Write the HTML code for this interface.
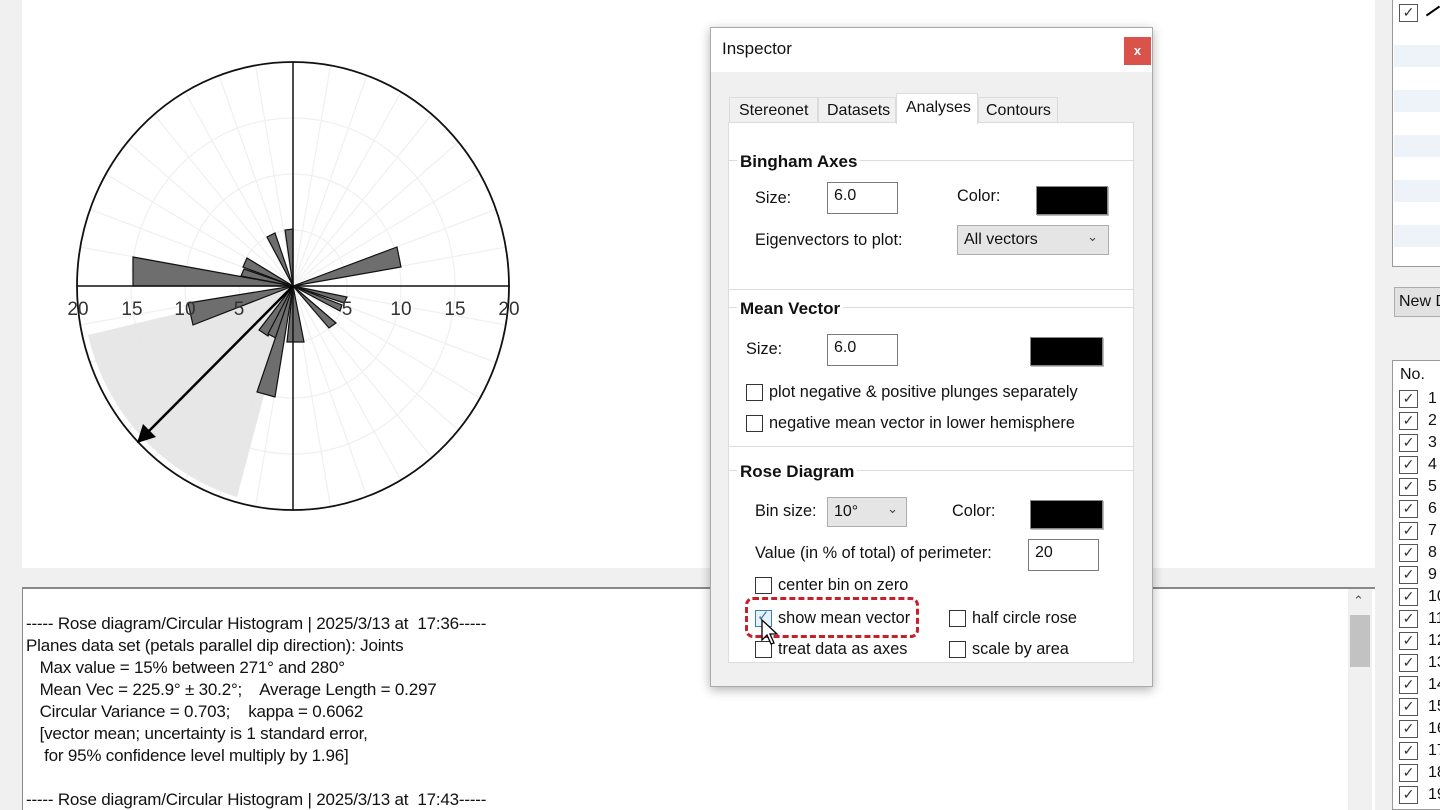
<!DOCTYPE html>
<html><head><meta charset="utf-8"><style>
*{margin:0;padding:0;box-sizing:border-box}
body{width:1440px;height:810px;overflow:hidden;background:#f0f0f0;position:relative;font-family:"Liberation Sans",sans-serif;color:#111}
.a{position:absolute}
.t{position:absolute;font-size:16.3px;white-space:nowrap}
.cb{position:absolute;width:17px;height:17px;border:1.5px solid #333;background:#fff}
.inp{position:absolute;background:#fff;border:1px solid #7a7a7a;font-size:16px;padding:4px 0 0 6px}
.sw{position:absolute;background:#000;border:1px solid #888;box-shadow:1px 1px 0 #bbb}
.sel{position:absolute;background:#e5e5e5;border:1px solid #adadad;font-size:16px;padding:5px 0 0 6px}
.grp{position:absolute;left:728px;width:406px;border:1px solid #dcdcdc}
.gh{position:absolute;font-size:17px;font-weight:bold;background:#fff;padding:0 3px}
.log{position:absolute;left:26px;font-size:17px;white-space:pre;color:#111;letter-spacing:-0.2px}
.rc{position:absolute;left:1399px;width:19px;height:18px;border:1.5px solid #555;background:#fff;font-size:14px;line-height:15px;text-align:center;color:#333}
.rn{position:absolute;left:1428px;font-size:16px}
</style></head><body>
<div class="a" style="left:22px;top:0;width:1353px;height:568px;background:#fff"></div>
<svg class="a" style="left:0;top:0" width="700" height="568">
<g transform="translate(293,286) scale(1,1.037)" stroke="#f0f0f0" stroke-width="1.2" fill="none">
<circle r="54"/><circle r="108"/><circle r="162"/>
<line x1="-216" y1="0" x2="216" y2="0" transform="rotate(10)"/><line x1="-216" y1="0" x2="216" y2="0" transform="rotate(20)"/><line x1="-216" y1="0" x2="216" y2="0" transform="rotate(30)"/><line x1="-216" y1="0" x2="216" y2="0" transform="rotate(40)"/><line x1="-216" y1="0" x2="216" y2="0" transform="rotate(50)"/><line x1="-216" y1="0" x2="216" y2="0" transform="rotate(60)"/><line x1="-216" y1="0" x2="216" y2="0" transform="rotate(70)"/><line x1="-216" y1="0" x2="216" y2="0" transform="rotate(80)"/><line x1="-216" y1="0" x2="216" y2="0" transform="rotate(100)"/><line x1="-216" y1="0" x2="216" y2="0" transform="rotate(110)"/><line x1="-216" y1="0" x2="216" y2="0" transform="rotate(120)"/><line x1="-216" y1="0" x2="216" y2="0" transform="rotate(130)"/><line x1="-216" y1="0" x2="216" y2="0" transform="rotate(140)"/><line x1="-216" y1="0" x2="216" y2="0" transform="rotate(150)"/><line x1="-216" y1="0" x2="216" y2="0" transform="rotate(160)"/><line x1="-216" y1="0" x2="216" y2="0" transform="rotate(170)"/>
</g>
<path d="M293,286 L88,335 A216,224 0 0 0 237,497 Z" fill="#e4e4e4" opacity=".9"/>
<g fill="#6e6e6e" stroke="#111" stroke-width="1.2">
<polygon points="293,286 133,286 133,257"/>
<polygon points="293,286 397,247 401,267"/>
<polygon points="293,286 285,230 293,229"/>
<polygon points="293,286 267,237 275,233"/>
<polygon points="293,286 243,267 247,258"/>
<polygon points="293,286 241,276 244,269"/>
<polygon points="293,286 188,303 193,325"/>
<polygon points="293,286 259,330 268,336"/>
<polygon points="293,286 268,334 276,338"/>
<polygon points="293,286 257,392 275,397"/>
<polygon points="293,286 287,342 304,342"/>
<polygon points="293,286 347,297 344,303"/>
<polygon points="293,286 342,305 340,311"/>
<polygon points="293,286 336,323 329,328"/>
</g>
<line x1="293" y1="62" x2="293" y2="510" stroke="#111" stroke-width="1.5"/>
<line x1="77" y1="286" x2="510" y2="286" stroke="#111" stroke-width="1.5"/>
<ellipse cx="293" cy="286" rx="216" ry="224" fill="none" stroke="#111" stroke-width="1.8"/>
<line x1="293" y1="286" x2="146" y2="434" stroke="#000" stroke-width="2.5"/>
<polygon points="137,443 143,424 156,437" fill="#000"/>
<g font-family="Liberation Sans,sans-serif" font-size="19" fill="#333" text-anchor="middle">
<text x="78" y="315">20</text><text x="132" y="315">15</text><text x="185" y="315">10</text><text x="239" y="315">5</text><text x="347" y="315">5</text><text x="401" y="315">10</text><text x="455" y="315">15</text><text x="509" y="315">20</text></g>
</svg>

<div class="a" style="left:22px;top:587px;width:1353px;height:223px;background:#fff;border-top:2px solid #888;border-left:1px solid #888"></div>
<div class="a" style="left:1348px;top:589px;width:24px;height:221px;background:#f0f0f0"></div>
<div class="a" style="left:1350px;top:615px;width:20px;height:52px;background:#c2c2c2"></div>
<div class="a" style="left:1353px;top:593px;font-size:13px;color:#555">&#8963;</div>
<div class="log" style="top:614px">----- Rose diagram/Circular Histogram | 2025/3/13 at  17:36-----</div>
<div class="log" style="top:636px">Planes data set (petals parallel dip direction): Joints</div>
<div class="log" style="top:658px">   Max value = 15% between 271° and 280°</div>
<div class="log" style="top:680px">   Mean Vec = 225.9° ± 30.2°;    Average Length = 0.297</div>
<div class="log" style="top:702px">   Circular Variance = 0.703;    kappa = 0.6062</div>
<div class="log" style="top:724px">   [vector mean; uncertainty is 1 standard error,</div>
<div class="log" style="top:746px">    for 95% confidence level multiply by 1.96]</div>
<div class="log" style="top:790px">----- Rose diagram/Circular Histogram | 2025/3/13 at  17:43-----</div>

<div class="a" style="left:1392px;top:0;width:48px;height:267px;background:#fff;border:1px solid #999;border-right:none;border-top:none"></div>
<div class="a" style="left:1394px;top:45px;width:46px;height:22px;background:#eef2f9"></div>
<div class="a" style="left:1394px;top:90px;width:46px;height:22px;background:#eef2f9"></div>
<div class="a" style="left:1394px;top:135px;width:46px;height:22px;background:#eef2f9"></div>
<div class="a" style="left:1394px;top:180px;width:46px;height:22px;background:#eef2f9"></div>
<div class="a" style="left:1394px;top:225px;width:46px;height:22px;background:#eef2f9"></div>
<div class="rc" style="top:4px">✓</div>
<div class="a" style="left:1425px;top:10px;width:16px;height:2px;background:#000;transform:rotate(-35deg)"></div>
<div class="a" style="left:1394px;top:287px;width:46px;height:30px;background:#e1e1e1;border:1px solid #adadad;border-right:none;font-size:16px;padding:5px 0 0 4px;white-space:nowrap;overflow:hidden">New D</div>
<div class="a" style="left:1392px;top:360px;width:48px;height:450px;background:#fff;border:1px solid #999;border-right:none"></div>
<div class="a" style="left:1400px;top:366px;font-size:16px">No.</div>
<div class="rc" style="top:390px">✓</div><div class="rn" style="top:390px">1</div>
<div class="rc" style="top:412px">✓</div><div class="rn" style="top:412px">2</div>
<div class="rc" style="top:434px">✓</div><div class="rn" style="top:434px">3</div>
<div class="rc" style="top:456px">✓</div><div class="rn" style="top:456px">4</div>
<div class="rc" style="top:478px">✓</div><div class="rn" style="top:478px">5</div>
<div class="rc" style="top:500px">✓</div><div class="rn" style="top:500px">6</div>
<div class="rc" style="top:522px">✓</div><div class="rn" style="top:522px">7</div>
<div class="rc" style="top:544px">✓</div><div class="rn" style="top:544px">8</div>
<div class="rc" style="top:566px">✓</div><div class="rn" style="top:566px">9</div>
<div class="rc" style="top:588px">✓</div><div class="rn" style="top:588px">10</div>
<div class="rc" style="top:610px">✓</div><div class="rn" style="top:610px">11</div>
<div class="rc" style="top:632px">✓</div><div class="rn" style="top:632px">12</div>
<div class="rc" style="top:654px">✓</div><div class="rn" style="top:654px">13</div>
<div class="rc" style="top:676px">✓</div><div class="rn" style="top:676px">14</div>
<div class="rc" style="top:698px">✓</div><div class="rn" style="top:698px">15</div>
<div class="rc" style="top:720px">✓</div><div class="rn" style="top:720px">16</div>
<div class="rc" style="top:742px">✓</div><div class="rn" style="top:742px">17</div>
<div class="rc" style="top:764px">✓</div><div class="rn" style="top:764px">18</div>
<div class="rc" style="top:786px">✓</div><div class="rn" style="top:786px">19</div>

<div class="a" style="left:710px;top:27px;width:443px;height:660px;background:#f0f0f0;border:1px solid #aaa;box-shadow:0 3px 10px rgba(0,0,0,.3)"></div>
<div class="a" style="left:711px;top:28px;width:441px;height:44px;background:#fff"></div>
<div class="t" style="left:722px;top:39px;font-size:17px">Inspector</div>
<div class="a" style="left:1124px;top:37px;width:27px;height:28px;background:#d9534a;color:#fff;font-size:13px;font-weight:bold;text-align:center;line-height:27px">x</div>
<div class="a" style="left:728px;top:122px;width:406px;height:541px;background:#fff;border:1px solid #dcdcdc"></div>
<div class="a" style="left:729px;top:97px;width:89px;height:26px;background:#f0f0f0;border:1px solid #dcdcdc;font-size:16px;padding:4px 0 0 9px">Stereonet</div>
<div class="a" style="left:818px;top:97px;width:78px;height:26px;background:#f0f0f0;border:1px solid #dcdcdc;font-size:16px;padding:4px 0 0 8px">Datasets</div>
<div class="a" style="left:896px;top:93px;width:82px;height:31px;background:#fff;border:1px solid #dcdcdc;border-bottom:none;font-size:16px;padding:5px 0 0 9px">Analyses</div>
<div class="a" style="left:978px;top:97px;width:80px;height:26px;background:#f0f0f0;border:1px solid #dcdcdc;font-size:16px;padding:4px 0 0 7px">Contours</div>

<div class="grp" style="top:160px;height:130px"></div>
<div class="gh" style="left:737px;top:152px">Bingham Axes</div>
<div class="t" style="left:755px;top:189px">Size:</div>
<div class="inp" style="left:827px;top:182px;width:71px;height:32px">6.0</div>
<div class="t" style="left:957px;top:187px">Color:</div>
<div class="sw" style="left:1036px;top:186px;width:72px;height:29px"></div>
<div class="t" style="left:755px;top:231px">Eigenvectors to plot:</div>
<div class="sel" style="left:957px;top:225px;width:152px;height:30px">All vectors<span style="position:absolute;right:10px;top:3px;font-size:13px;color:#444">&#8964;</span></div>

<div class="grp" style="top:307px;height:140px"></div>
<div class="gh" style="left:737px;top:299px">Mean Vector</div>
<div class="t" style="left:746px;top:340px">Size:</div>
<div class="inp" style="left:827px;top:334px;width:71px;height:32px">6.0</div>
<div class="sw" style="left:1030px;top:337px;width:73px;height:29px"></div>
<div class="cb" style="left:746px;top:384px"></div><div class="t" style="left:769px;top:383px">plot negative &amp; positive plunges separately</div>
<div class="cb" style="left:746px;top:415px"></div><div class="t" style="left:769px;top:414px">negative mean vector in lower hemisphere</div>

<div class="grp" style="top:470px;height:193px"></div>
<div class="gh" style="left:737px;top:462px">Rose Diagram</div>
<div class="t" style="left:755px;top:502px">Bin size:</div>
<div class="sel" style="left:827px;top:497px;width:80px;height:30px">10°<span style="position:absolute;right:8px;top:3px;font-size:13px;color:#444">&#8964;</span></div>
<div class="t" style="left:952px;top:502px">Color:</div>
<div class="sw" style="left:1030px;top:500px;width:73px;height:29px"></div>
<div class="t" style="left:755px;top:544px">Value (in % of total) of perimeter:</div>
<div class="inp" style="left:1028px;top:539px;width:71px;height:32px">20</div>
<div class="cb" style="left:755px;top:577px"></div><div class="t" style="left:778px;top:576px">center bin on zero</div>
<div class="cb" style="left:755px;top:610px;border-color:#3c7fb1;background:#e6f1fb"></div><div class="a" style="left:757px;top:607px;color:#3c7fb1;font-size:15px">✓</div>
<div class="t" style="left:778px;top:609px">show mean vector</div>
<div class="a" style="left:745px;top:597px;width:174px;height:41px;border:3px dashed #c8202a;border-radius:8px"></div>
<div class="cb" style="left:949px;top:610px"></div><div class="t" style="left:972px;top:609px">half circle rose</div>
<div class="cb" style="left:755px;top:641px"></div><div class="t" style="left:778px;top:640px">treat data as axes</div>
<div class="cb" style="left:949px;top:641px"></div><div class="t" style="left:972px;top:640px">scale by area</div>
<svg class="a" style="left:760px;top:618px" width="22" height="30"><path d="M2,2 L2,22 L7,17 L11,26 L14,25 L10,16 L17,16 Z" fill="#fff" stroke="#000" stroke-width="1.3"/></svg>
</body></html>
